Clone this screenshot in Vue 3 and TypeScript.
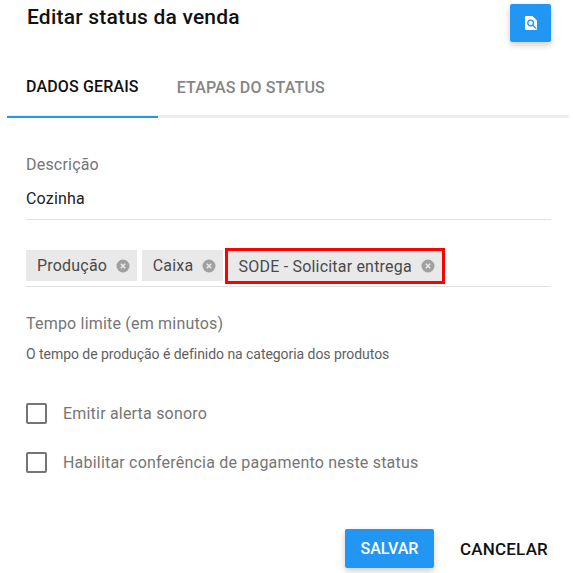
<script setup lang="ts">
import { ref } from 'vue'

const tabs = ['Dados gerais', 'Etapas do status']
const activeTab = ref(0)

const chips = ref([
  { label: 'Produção', marked: false },
  { label: 'Caixa', marked: false },
  { label: 'SODE - Solicitar entrega', marked: true },
])

const checks = ref([
  { label: 'Emitir alerta sonoro', value: false },
  { label: 'Habilitar conferência de pagamento neste status', value: false },
])
</script>

<template>
  <div class="dialog">
    <header class="head">
      <h2 class="title">Editar status da venda</h2>
      <button class="icon-btn" type="button" aria-label="Buscar">
        <svg width="12" height="14" viewBox="0 0 12 14">
          <path d="M1 0h6.5L12 4.5V13a1 1 0 0 1-1 1H1a1 1 0 0 1-1-1V1a1 1 0 0 1 1-1z" fill="#fff" />
          <circle cx="5.6" cy="7" r="2.8" fill="none" stroke="#2196f3" stroke-width="1.3" />
          <path d="M7.6 9l3.6 3.6" stroke="#2196f3" stroke-width="1.3" />
        </svg>
      </button>
    </header>

    <nav class="tabs">
      <a
        v-for="(tab, i) in tabs"
        :key="tab"
        class="tab"
        :class="{ active: activeTab === i }"
        @click="activeTab = i"
      >{{ tab }}</a>
    </nav>

    <section class="form">
      <div class="field">
        <label class="field-label">Descrição</label>
        <div class="field-value">Cozinha</div>
      </div>

      <div class="chips">
        <span v-for="chip in chips" :key="chip.label" class="chip" :class="{ marked: chip.marked }">
          {{ chip.label }}
          <svg class="chip-x" width="14" height="14" viewBox="0 0 14 14">
            <circle cx="7" cy="7" r="6.5" fill="#a0a0a0" />
            <path d="M4.8 4.8l4.4 4.4M9.2 4.8l-4.4 4.4" stroke="#e8e8e8" stroke-width="1.6" />
          </svg>
        </span>
      </div>

      <div class="limit">Tempo limite (em minutos)</div>
      <div class="hint">O tempo de produção é definido na categoria dos produtos</div>

      <div class="checks">
        <label v-for="item in checks" :key="item.label" class="check">
          <input v-model="item.value" type="checkbox" />
          <span class="box"></span>
          {{ item.label }}
        </label>
      </div>
    </section>

    <footer class="actions">
      <button class="save" type="button">Salvar</button>
      <button class="cancel" type="button">Cancelar</button>
    </footer>
  </div>
</template>

<style scoped>
.dialog {
  width: 573px;
  height: 573px;
  overflow: hidden;
  background: #fff;
  font-family: Roboto, "Liberation Sans", sans-serif;
  letter-spacing: 0.2px;
  color: #616161;
}

.head {
  display: flex;
  justify-content: space-between;
  align-items: flex-start;
  height: 55px;
  padding: 4px 22px 0 27px;
  box-sizing: border-box;
}

.title {
  margin: 0;
  font-size: 21px;
  line-height: 26px;
  font-weight: 500;
  letter-spacing: 0.2px;
  color: #111;
}

.icon-btn {
  display: flex;
  align-items: center;
  justify-content: center;
  width: 41px;
  height: 38px;
  padding: 0;
  border: 0;
  border-radius: 2px;
  background: #2196f3;
  box-shadow: 0 3px 6px rgba(0, 0, 0, 0.2);
}

.tabs {
  display: flex;
  height: 63px;
  margin: 0 4px 0 7px;
  border-bottom: 3px solid #eeeeee;
  box-sizing: border-box;
}

.tab {
  display: flex;
  align-items: center;
  height: 63px;
  box-sizing: border-box;
  padding: 2px 19px 0;
  font-size: 16px;
  font-weight: 500;
  letter-spacing: 0.15px;
  text-transform: uppercase;
  color: #858585;
}

.tab.active {
  color: #111;
  border-bottom: 2px solid #2196f3;
}

.form {
  padding: 0 22px 0 26px;
}

.field {
  padding-top: 36px;
  height: 102px;
  box-sizing: border-box;
  border-bottom: 1px solid #e0e0e0;
}

.field-label {
  display: block;
  font-size: 16px;
  line-height: 22px;
  color: #757575;
}

.field-value {
  margin-top: 12px;
  font-size: 16px;
  line-height: 22px;
  color: #222;
}

.chips {
  display: flex;
  align-items: flex-end;
  gap: 4.6px;
  height: 67px;
  padding-bottom: 5px;
  box-sizing: border-box;
  border-bottom: 1px solid #e0e0e0;
}

.chip {
  display: inline-flex;
  align-items: center;
  gap: 9px;
  height: 31px;
  padding: 0 7px 0 11px;
  box-sizing: border-box;
  font-size: 16px;
  color: #4a4a4a;
  background: #e9e9e9;
}

.chip.marked {
  height: 30px;
  padding: 0 7px 0 10.6px;
  box-shadow: 0 0 0 3px #f00;
}

.limit {
  margin-top: 26px;
  font-size: 16px;
  line-height: 22px;
  color: #757575;
}

.hint {
  margin-top: 10px;
  font-size: 14px;
  line-height: 18px;
  letter-spacing: -0.05px;
  color: #616161;
}

.checks {
  display: flex;
  flex-direction: column;
  gap: 27px;
  margin-top: 39px;
}

.check {
  display: flex;
  align-items: center;
  gap: 16px;
  height: 22px;
  font-size: 16px;
  color: #757575;
}

.check input {
  display: none;
}

.box {
  width: 17px;
  height: 17px;
  border: 2px solid #757575;
  border-radius: 2px;
}

.actions {
  display: flex;
  justify-content: flex-end;
  align-items: center;
  gap: 26px;
  margin-top: 56px;
  padding-right: 25px;
}

.save,
.cancel {
  height: 39px;
  padding: 0;
  border: 0;
  font-family: inherit;
  font-size: 16px;
  font-weight: 500;
  text-transform: uppercase;
}

.save {
  width: 89px;
  color: #fff;
  background: #2196f3;
  border-radius: 2px;
  box-shadow: 0 3px 6px rgba(0, 0, 0, 0.2);
}

.cancel {
  font-size: 17px;
  letter-spacing: 0.2px;
  color: #111;
  background: none;
}
</style>
